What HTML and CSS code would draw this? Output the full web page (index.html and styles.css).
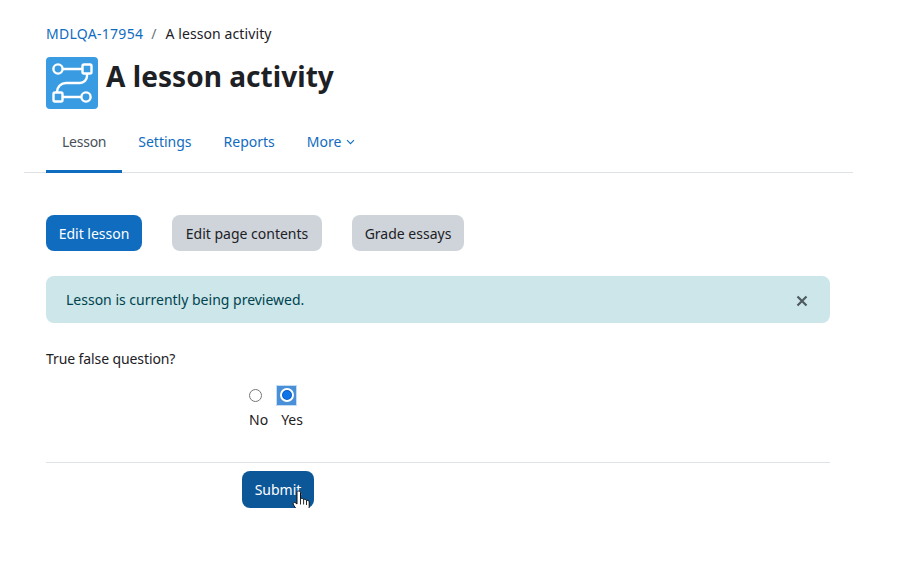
FILE: index.html
```html
<!DOCTYPE html>
<html lang="en">
<head>
<meta charset="utf-8">
<title>A lesson activity</title>
<link rel="stylesheet" href="styles.css">
</head>
<body>
<div class="page">
  <header class="head">
    <nav class="crumbs"><a class="course" href="#">MDLQA-17954</a><span class="sep">/</span><span class="crumb-current">A lesson activity</span></nav>
    <div class="title-row">
      <svg class="mod-icon" viewBox="0 0 52 52" width="52" height="52" aria-hidden="true">
        <rect width="52" height="52" rx="4" fill="#399be2"/>
        <g fill="none" stroke="#fff" stroke-width="2.400">
          <circle cx="12" cy="12" r="4.600"/>
          <rect x="36.500" y="7.500" width="9" height="9" rx="1.500"/>
          <rect x="7.500" y="35.500" width="9" height="9" rx="1.500"/>
          <circle cx="40" cy="40" r="4.600"/>
          <path d="M16.600 12H36.500M41 16.500V19a7 7 0 0 1-7 7H20a9 9 0 0 0-9 9v.5M16.500 40H35.400"/>
        </g>
      </svg>
      <h1>A lesson activity</h1>
    </div>
  </header>
  <nav class="tabs">
    <a class="tab active" href="#">Lesson</a>
    <a class="tab" href="#">Settings</a>
    <a class="tab" href="#">Reports</a>
    <a class="tab" href="#">More<svg class="caret" viewBox="0 0 9 6" width="9" height="6" aria-hidden="true"><path d="M1 1.200 4.500 4.700 8 1.200" fill="none" stroke="currentColor" stroke-width="1.100"/></svg></a>
  </nav>
  <main class="content">
    <div class="actions">
      <a class="btn primary" href="#">Edit lesson</a>
      <a class="btn secondary" href="#">Edit page contents</a>
      <a class="btn secondary" href="#">Grade essays</a>
    </div>
    <div class="alert">
      <span>Lesson is currently being previewed.</span>
      <svg class="close" viewBox="0 0 12 12" width="12" height="12" aria-hidden="true"><path d="M1.500 1.500l9 9M10.500 1.500l-9 9" stroke="#4f5a61" stroke-width="2.200" fill="none"/></svg>
    </div>
    <p class="question">True false question?</p>
    <div class="answers">
      <div class="answer">
        <span class="radio-slot"><span class="radio"></span></span>
        <span class="answer-label">No</span>
      </div>
      <div class="answer answer-yes">
        <span class="radio-slot"><span class="radio-focus"><span class="radio-on"></span></span></span>
        <span class="answer-label">Yes</span>
      </div>
    </div>
    <div class="submit-row">
      <span class="submit-wrap">
        <button class="submit" type="button">Submit</button>
        <svg class="cursor" viewBox="0 0 18 25" width="18" height="25" aria-hidden="true">
          <path d="M6.500 1C5.500 1 5 1.700 5 2.600V14L3.600 12.900C2.200 11.700.3 13.100 1.500 14.900L4.500 19.500C5.500 21 6.300 22 7 23.500H14.300C15.500 21.800 17.200 19.800 17.200 16.800V11.900C17.200 10.500 15.500 10 14.500 10.700 14.300 9.500 12.700 8.900 11.600 9.600 11.300 8.500 9.800 8 8.500 8.800V2.600C8.500 1.700 7.700 1 6.500 1Z" fill="#fff" stroke="#111" stroke-width="1"/>
          <path d="M8.500 8.800V14.500M11.600 9.600V14.500M14.500 10.700V15" stroke="#111" stroke-width=".9" fill="none"/>
        </svg>
      </span>
    </div>
  </main>
</div>
</body>
</html>
```
FILE: styles.css
```css
* { box-sizing: border-box; }
html, body { margin: 0; padding: 0; background: #fff; }
body {
  font-family: "Noto Sans", "Open Sans", sans-serif;
  font-size: 14px;
  line-height: 21px;
  color: #1d2125;
}
a { text-decoration: none; color: #0f6cbf; }
.page { width: 829px; margin-left: 24px; padding-top: 23px; }
.head { padding-left: 22px; }
.crumbs { display: flex; align-items: center; height: 21px; }
.course { letter-spacing: .28px; }
.crumb-current { letter-spacing: .1px; margin-left: 1px; }
.sep { margin: 0 8px; color: #6a737b; }
.title-row { display: flex; align-items: center; gap: 8px; margin-top: 13px; }
.mod-icon { display: block; flex: none; }
h1 { margin: 0; font-size: 28px; line-height: 40px; font-weight: 700; position: relative; top: -7px; letter-spacing: .05px; }
.tabs { display: flex; margin-top: 12px; padding-left: 22px; height: 52px; border-bottom: 1px solid #dee2e6; }
.tab { display: flex; align-items: center; padding: 0 16px 11px; height: 51px; }
.tab.active { color: #495057; border-bottom: 3px solid #0f6cbf; height: 52px; padding-bottom: 9px; margin-bottom: -1px; letter-spacing: -.25px; }
.caret { margin-left: 5px; margin-top: 1px; }
.content { padding: 42px 0 0 22px; width: 806px; }
.actions { display: flex; gap: 30px; }
.btn { display: flex; align-items: center; justify-content: center; height: 36px; border-radius: 8px; }
.primary { background: #0f6cbf; color: #fff; width: 96px; }
.secondary { background: #ced4da; color: #1d2125; }
.secondary:nth-child(2) { width: 150px; }
.secondary:nth-child(3) { width: 112px; }
.alert { display: flex; align-items: center; justify-content: space-between; height: 47px; margin-top: 25px; padding: 0 22px 0 20px; background: #cce6ea; border-radius: 8px; color: #00434e; }
.close { display: block; margin-top: 3px; }
.question { margin: 25px 0 0; letter-spacing: -.1px; }
.answers { display: flex; gap: 12px; margin-top: 16px; margin-left: 203px; height: 54px; }
.answer { display: flex; flex-direction: column; align-items: flex-start; }
.answer-yes .answer-label { margin-left: 1px; }
.radio-slot { display: flex; align-items: center; height: 20px; }
.answer-label { margin-top: 4px; }
.radio { display: block; width: 13px; height: 13px; border: 1px solid #767676; border-radius: 50%; background: #fff; }
.radio-focus { display: flex; align-items: center; justify-content: center; width: 21px; height: 21px; margin: 0 0 0 -4px; background: #4a90d9; border: 1px solid #c5ddf4; }
.radio-on { display: block; width: 14px; height: 14px; border-radius: 50%; background: #0d74ea; border: 2px solid #fff; box-shadow: inset 0 0 0 1px #0a58b8; }
.submit-row { margin-top: 23px; padding: 8px 0 0 196px; border-top: 1px solid #dee2e6; }
.submit-wrap { position: relative; display: inline-block; }
.submit { display: block; width: 72px; height: 37px; border: 0; padding: 0; border-radius: 8px; background: #0c5798; color: #fff; font: inherit; }
.cursor { position: absolute; left: 50px; top: 19px; }
```
